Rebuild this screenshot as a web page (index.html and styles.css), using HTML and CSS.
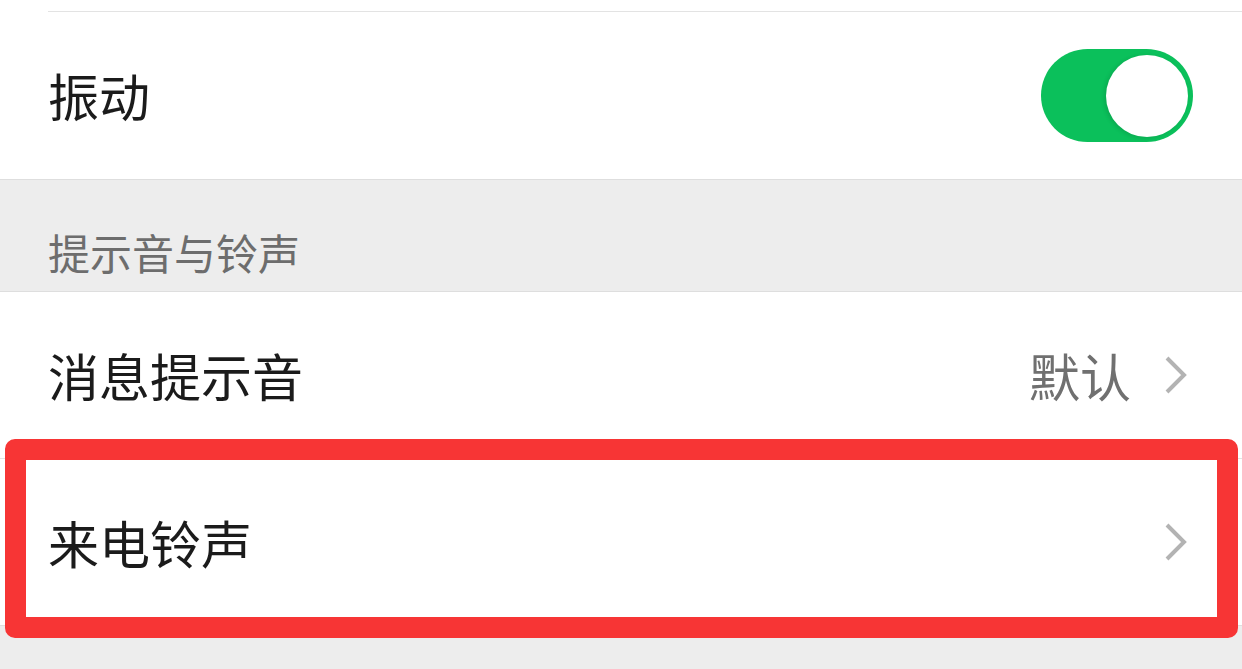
FILE: index.html
```html
<!DOCTYPE html>
<html>
<head>
	<meta name="viewport" content="width=device-width, initial-scale=1.0">
	<meta charset="utf-8">
	<link rel="stylesheet" href="styles.css">
	<title>新消息通知</title>
</head>
<body>
	<div class="group">
		<div class="row-tail"></div>
		<div class="row row-inset">
			<span class="row-title">振动</span>
			<div class="switch on"><div class="knob"></div></div>
		</div>
	</div>

	<div class="section-title">提示音与铃声</div>

	<div class="group">
		<div class="row">
			<span class="row-title">消息提示音</span>
			<div class="row-right">
				<span class="row-value">默认</span>
				<svg class="chevron" width="24" height="40" viewBox="0 0 24 40"><polyline points="3,3 20,20 3,37" fill="none" stroke="#b3b3b3" stroke-width="4"/></svg>
			</div>
		</div>
		<div class="row row-line">
			<span class="row-title">来电铃声</span>
			<div class="row-right">
				<svg class="chevron" width="24" height="40" viewBox="0 0 24 40"><polyline points="3,3 20,20 3,37" fill="none" stroke="#b3b3b3" stroke-width="4"/></svg>
			</div>
			<div class="highlight"></div>
		</div>
	</div>

	<div class="page-end"></div>
</body>
</html>
```

FILE: styles.css
```css
body {
	margin: 0;
	background-color: #ededed;
	font-family: "Noto Sans CJK SC", "Noto Sans", sans-serif;
	color: #1b1b1b;
}
.group {
	background-color: #fff;
	border-bottom: 1px solid #dedede;
}
.row-tail {
	height: 11px;
}
.row {
	position: relative;
	display: flex;
	align-items: center;
	justify-content: space-between;
	height: 166px;
	padding: 0 48px 0 48px;
}
.row-inset {
	height: 167px;
	border-top: 1px solid #e3e3e3;
	margin-left: 48px;
	padding-left: 0;
}
.row-line {
	border-top: 1px solid #e3e3e3;
}
.row-title {
	font-size: 51px;
	line-height: 1;
}
.row-right {
	display: flex;
	align-items: center;
	gap: 33px;
}
.row-value {
	font-size: 51px;
	line-height: 1;
	color: #707070;
}
.chevron {
	display: block;
	margin-right: 6px;
}
.switch {
	width: 152px;
	height: 93px;
	border-radius: 47px;
	background-color: #0bc05b;
	display: flex;
	align-items: center;
	justify-content: flex-end;
	padding: 0 5px;
	box-sizing: border-box;
	margin-right: 1px;
}
.knob {
	width: 82px;
	height: 82px;
	border-radius: 50%;
	background-color: #fff;
	box-shadow: -2px 1px 4px rgba(0, 0, 0, 0.12);
}
.section-title {
	height: 112px;
	box-sizing: border-box;
	padding: 0 0 18px 48px;
	display: flex;
	align-items: flex-end;
	font-size: 42px;
	line-height: 1;
	color: #6d6d6d;
	border-bottom: 1px solid #dedede;
}
.highlight {
	position: absolute;
	left: 5px;
	right: 4px;
	top: -20px;
	bottom: -13px;
	border: 21px solid #f73535;
	border-radius: 10px;
	pointer-events: none;
}
.page-end {
	height: 60px;
}
```
